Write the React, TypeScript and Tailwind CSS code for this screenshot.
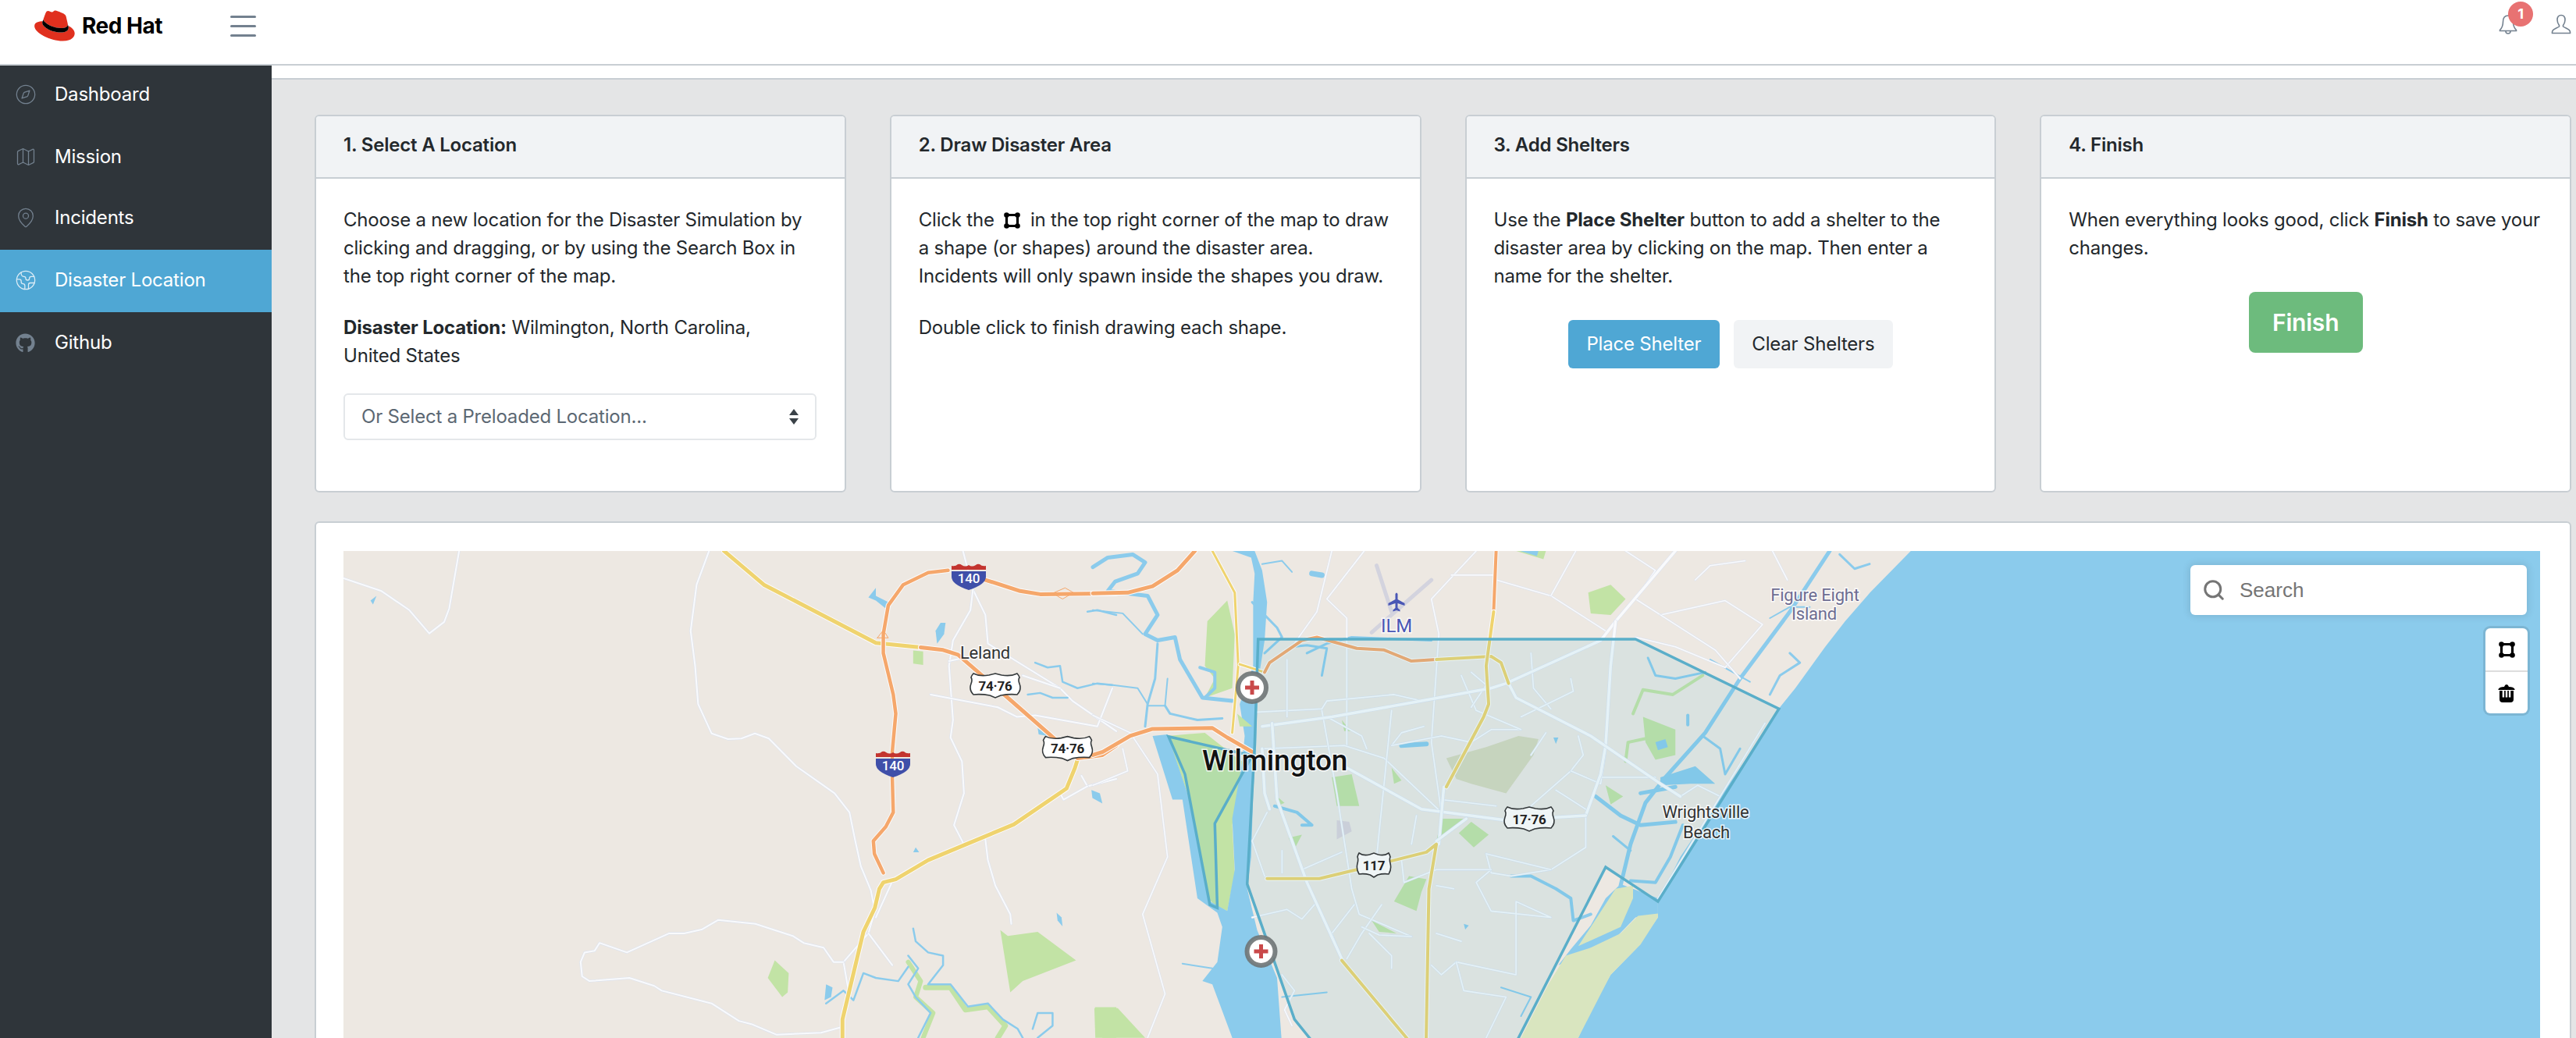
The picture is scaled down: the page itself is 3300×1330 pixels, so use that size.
import React from "react";
import { Compass, Map as MapIcon, MapPin, Earth, Search } from "lucide-react";
import { FaGithub } from "react-icons/fa";

const LAND = "#ede8e2";
const WATER = "#8bcbec";
const GREEN = "#c2e3a5";
const ORANGE = "#f5a76b";
const YELLOW = "#efd36e";

// map coords are read off the zoomed crops, so each group gets its own scale
const LEFT = "translate(-10,-16) scale(0.6378,0.408)";
const RIGHT = "translate(960,-16) scale(0.6378,0.408)";

const L = ({ p, c, w }: { p: string; c: string; w: number }) => (
    <polyline points={p} fill="none" stroke={c} strokeWidth={w} strokeLinejoin="round" strokeLinecap="round" vectorEffect="non-scaling-stroke" />
);
const F = ({ p, c }: { p: string; c: string }) => <polygon points={p} fill={c} />;

// road with a thin light edge
const R = ({ p, c, w }: { p: string; c: string; w: number }) => (
    <>
        <L p={p} c="#fbfbfc" w={w + 2} />
        <L p={p} c={c} w={w} />
    </>
);
const Minor = ({ p, w = 2 }: { p: string; w?: number }) => (
    <>
        <L p={p} c="#dde3ef" w={w + 1.2} />
        <L p={p} c="#f9fafc" w={w} />
    </>
);

const leftRoads = [
    "16,125 92,165 148,225 188,298 218,262 228,220 248,39",
    "750,39 725,145 713,290 722,400 728,520 755,612 788,630 815,628 842,612 870,628 925,715 1002,800 1032,860 1043,945 1055,1030 1075,1105 1083,1170 1070,1240 1020,1330 1030,1420",
    "1260,39 1280,160 1305,240 1310,330 1455,470 1480,510 1568,605",
    "1280,160 1275,225 1240,320 1232,400 1240,570 1235,625 1258,700 1262,800 1242,900 1260,955",
    "1195,490 1330,530 1368,560 1405,555 1530,590 1560,470",
    "1305,945 1310,1010 1325,1090 1355,1180 1357,1210",
    "1380,430 1455,470",
    "1232,385 1290,365",
    "1070,1240 1118,1340",
    "1120,1070 1085,1190",
    "1568,755 1510,778 1498,745",
    "1510,778 1462,820 1455,800",
    "1020,1330 1000,1330 980,1285 940,1270 918,1248 843,1210 768,1198 735,1228 700,1240 670,1240 585,1300 530,1270 520,1295 500,1300 492,1330 495,1375 510,1390 590,1380 640,1405 655,1420 755,1460 810,1515 835,1525 885,1558 975,1552 1015,1535",
];

const leftCreeks = [
    "1160,1225 1165,1265 1190,1300 1220,1310 1220,1340 1190,1400 1235,1400 1270,1470 1310,1460 1340,1510 1370,1540 1380,1568",
    "1150,1310 1170,1350 1150,1400 1165,1440 1195,1490 1170,1568",
    "985,1460 1020,1420 1040,1450 1060,1365 1085,1380 1130,1390 1150,1345",
    "1405,390 1430,405 1455,400 1460,450 1490,470 1530,455 1560,460",
    "1390,490 1415,485 1440,500 1470,500",
    "1510,230 1530,225 1568,240",
    "1400,1540 1410,1490 1440,1490 1440,1530 1410,1568",
];

const rightThinRoads = [
    "0,555 75,610 130,740 150,1000 100,1180 145,1430 110,1568",
    "0,775 70,730 60,660",
    "480,39 450,230 400,340",
    "545,39 470,190 510,250 510,650",
    "770,39 680,190 695,300 680,640 700,860",
    "810,130 920,180 1030,290",
    "720,115 810,115",
    "970,39 920,180",
    "1070,39 1130,100 1090,190 1140,240 1270,195 1345,270 1270,405 1170,340 1090,310",
    "1140,240 1250,350 1300,440",
    "1210,130 1240,85 1310,70",
    "1365,39 1395,130",
    "330,545 460,535 470,510 605,490 660,510",
    "345,660 505,650 585,690 700,860",
    "390,380 390,560",
    "470,560 540,620 550,660",
    "460,540 490,800 520,1100 535,1180 640,1250",
    "600,540 570,1000",
    "600,650 620,610 665,590",
    "600,650 700,620 760,640 800,600 860,600",
    "740,430 770,540 860,600",
    "760,420 790,460 760,530",
    "880,360 885,470 920,535",
    "960,440 965,480 860,560",
    "910,610 880,680",
    "975,620 985,680 960,730 880,840",
    "960,730 1020,770 1030,670",
    "1020,750 1130,750",
    "930,790 990,850",
    "650,870 640,960",
    "810,840 700,820",
    "790,990 800,1050 840,1060 920,1040 990,970 990,870",
    "790,990 920,1040",
    "800,1040 770,1080 800,1170 920,1190 850,1140 850,1370 730,1330 700,1370 680,1340",
    "730,1330 745,1420 830,1440 790,1568",
    "620,1010 625,1080 690,1040 800,1040",
    "320,1190 390,1165 420,1195 445,1150",
    "420,1040 500,985",
    "380,980 380,1050",
    "350,860 320,950 345,1060",
    "525,1150 480,1240 500,1320",
    "580,1150 540,1240 510,1320",
    "540,1220 575,1245 640,1250",
    "555,1240 600,1310 600,1350",
    "690,1240 740,1265",
    "690,1090 725,1100",
    "1180,810 1215,775 1260,810",
    "1350,580 1260,810 1135,1130",
    "380,1370 405,1420 385,1480 400,1530",
];

const rightThickRoads = [
    "340,590 480,560 660,510 800,470 830,455 1020,320 1050,260 1170,39",
    "1050,260 1040,400 1030,650 1020,740 990,870",
    "835,455 850,500 1000,620 1140,770 1180,810",
    "510,720 660,850 830,885 990,870",
    "360,580 370,820 430,1080 500,1320",
    "340,660 345,800 355,850",
    "705,780 695,960",
    "750,880 690,950",
];

const rightCreeks: [string, number][] = [
    ["0,90 30,60 80,50 105,75 90,110 45,135 30,165 110,180 130,240 105,300 130,320 165,310 175,380 220,500 280,510", 5],
    ["0,225 60,235 100,300", 2],
    ["130,330 125,440 110,520 105,590", 3],
    ["110,525 145,525 150,440", 2],
    ["145,525 155,550 210,570 260,565", 3],
    ["0,455 40,460 90,470 110,520", 2],
    ["215,405 245,420 245,470 225,500", 4],
    ["340,80 380,70 400,105", 2],
    ["320,200 370,280 380,310 345,360", 3],
    ["400,340 430,335 470,345 460,430", 3],
    ["430,360 470,330 520,310 680,320", 3],
    ["1480,39 1400,230 1300,440 1230,610 1150,750 1110,830 1080,960 1060,1090", 5],
    ["1010,810 1060,870 1100,900 1170,890", 5],
    ["1045,935 1080,980", 3],
    ["1100,800 1170,780", 5],
    ["1185,900 1160,1000 1130,1080 1080,1075", 4],
    ["1320,450 1240,380", 2],
    ["1115,375 1130,430 1170,440 1230,420", 3],
    ["1400,360 1420,390 1380,430 1360,490", 3],
    ["1225,620 1260,660 1270,740 1300,660", 3],
    ["840,1060 880,1060 930,1100 960,1130 965,1200 1000,1180", 4],
    ["365,840 410,860 440,900 420,900", 4],
    ["620,650 670,645", 6],
    ["820,1410 880,1440 860,1500", 2],
    ["180,1335 240,1350", 2],
    ["380,1440 470,1425", 2],
    ["1360,250 1400,215 1440,215", 2],
    ["1500,50 1530,95 1560,80", 3],
    ["1195,555 1195,585", 4],
    ["460,115 440,110", 7],
];

const Hospital = ({ x, y }: { x: number; y: number }) => (
    <g transform={`translate(${x},${y})`}>
        <circle r="18" fill="#fff" stroke="#6e7475" strokeOpacity="0.9" strokeWidth="6" />
        <path d="M-2.5 -9h5v6.5h6.5v5h-6.500v6.500h-5v-6.500h-6.500v-5h6.500z" fill="#c9494a" />
    </g>
);

const UsShield = ({ x, y, t, w = 68, fill = "#fff" }: { x: number; y: number; t: string; w?: number; fill?: string }) => (
    <g transform={`translate(${x - w / 2},${y - 16})`}>
        <path
            transform={`scale(${w / 68},1)`}
            d="M6 1Q4 3 3 6Q5 9 3 14Q0 22 6 28Q16 27 27 29L34 32L41 29Q52 27 62 28Q68 22 65 14Q63 9 65 6Q64 3 62 1Q54 5 42 3L34 1L26 3Q14 5 6 1Z"
            fill={fill}
            stroke="#33383a"
            strokeWidth="1.6"
            vectorEffect="non-scaling-stroke"
        />
        <text x={w / 2} y="22.500" textAnchor="middle" fontFamily="Roboto, sans-serif" fontWeight="700" fontSize="17" fill="#222">{t}</text>
    </g>
);

const IShield = ({ x, y }: { x: number; y: number }) => (
    <g transform={`translate(${x - 22},${y - 16})`}>
        <path d="M0 3q5 1 8 -2q3 -1 5 1q5 3 9 0q4 3 9 0q2 -2 5 -1q3 3 8 2v5h-44z" fill="#c3342f" />
        <path d="M0 10h44v7q0 10 -22 17q-22 -7 -22 -17z" fill="#3f4fa9" />
        <text x="22" y="25" textAnchor="middle" fontFamily="Roboto, sans-serif" fontWeight="500" fontSize="17" fill="#fff">140</text>
    </g>
);

const Label = ({ x, y, t, size, fill = "#333", weight = 400 }: { x: number; y: number; t: string; size: number; fill?: string; weight?: number }) => (
    <text x={x} y={y} textAnchor="middle" fontFamily="Roboto, sans-serif" fontSize={size} fontWeight={weight} fill={fill} stroke="#fff" strokeWidth="3" strokeOpacity="0.8" style={{ paintOrder: "stroke" }}>
        {t}
    </text>
);

const DrawIcon = () => (
    <svg width="21" height="21" viewBox="0 0 21 21" className="inline-block align-[-3px]">
        <path d="M3.500 3.500h14v14h-14z" stroke="#000" strokeWidth="3.200" fill="none" />
        <circle cx="3.500" cy="3.500" r="3.300" />
        <circle cx="17.500" cy="3.500" r="3.300" />
        <circle cx="3.500" cy="17.500" r="3.300" />
        <circle cx="17.500" cy="17.500" r="3.300" />
    </svg>
);

const TrashIcon = () => (
    <svg width="22" height="24" viewBox="0 0 22 24">
        <path d="M0.500 7Q2 4 8 4Q9 1 11 1Q13 1 14 4Q20 4 21.500 7V8H0.500Z" />
        <path d="M2 9H20V20Q20 24 16 24H6Q2 24 2 20Z" />
        <path d="M5.700 9h2.400v8.500h-2.400zM9.800 9h2.400v8.500h-2.400zM13.900 9h2.400v8.500h-2.400z" fill="#fff" />
    </svg>
);

const MapArt = () => (
    <svg viewBox="0 0 2814 660" width="2814" height="660" className="block">
        <rect width="2814" height="660" fill={LAND} />

        {/* west side */}
        <g transform={LEFT}>
            {leftRoads.map((p, i) => <Minor key={i} p={p} />)}
            <F c={GREEN} p="1160,352 1180,355 1180,397 1160,393" />
            <F c={GREEN} p="882,1325 910,1365 908,1425 897,1440 868,1380" />
            <F c={GREEN} p="1335,1230 1350,1248 1410,1235 1487,1325 1380,1390 1355,1425" />
            <F c={GREEN} p="1525,1472 1568,1472 1568,1568 1540,1568" />
            <L p="1150,1330 1175,1390 1165,1440 1200,1490 1180,1568" c={GREEN} w={6} />
            <L p="1185,1410 1235,1410 1265,1480 1310,1470 1345,1530 1330,1568" c={GREEN} w={7} />
            <F c={WATER} p="1070,185 1085,155 1085,180 1110,200 1105,220 1085,195" />
            <F c={WATER} p="1215,265 1225,265 1222,300 1208,330 1205,290" />
            <F c={WATER} p="1410,595 1430,620 1412,615" />
            <F c={WATER} p="1518,790 1535,800 1540,832 1520,815" />
            <F c={WATER} p="1165,970 1172,985 1160,985" />
            <F c={WATER} p="1448,1175 1458,1190 1460,1218 1450,1200" />
            <F c={WATER} p="70,195 82,180 75,207" />
            <F c={WATER} p="985,1400 998,1410 995,1440 982,1450" />
            {leftCreeks.map((p, i) => <L key={i} p={p} c={WATER} w={2.5} />)}
            <R p="780,39 860,145 1085,328 1175,342" c={YELLOW} w={5} />
            <R p="1018,1568 1018,1510 1060,1235 1083,1160 1092,1100 1100,1080 1125,1070 1190,1010 1362,898 1468,785 1485,720 1490,695" c={YELLOW} w={5} />
            <R p="1175,342 1220,350 1250,365 1350,500 1445,630 1470,660 1490,690 1540,680 1568,650" c={ORANGE} w={5} />
            <R p="1230,100 1190,107 1140,145 1110,210 1100,300 1100,360 1120,490 1125,550 1118,670 1118,750 1120,860 1105,905 1080,950 1082,990 1100,1050" c={ORANGE} w={4.5} />
            <R p="1305,130 1375,165 1415,175 1568,172" c={ORANGE} w={5} />
            <L p="1088,312 1100,288 1110,312 1088,312" c={ORANGE} w={1} />
            <L p="1440,172 1465,155 1482,170 1460,190 1440,172" c={ORANGE} w={1} />
            <L p="600,35 770,35" c="#fff" w={3} />
        </g>

        {/* wilmington and the coast */}
        <g transform={RIGHT}>
            <F c={WATER} p="1643,39 3000,39 3000,1700 930,1700 975,1568 1000,1480 1040,1370 1090,1290 1135,1190 1135,1140 1180,1000 1240,860 1300,720 1380,530 1411,470 1471,340 1511,260 1561,170" />
            <F c={GREEN} p="230,260 270,195 285,300 280,470 225,500 245,440 225,400" />
            <F c={GREEN} p="3,1475 50,1475 105,1568 5,1568" />
            <F c={GREEN} p="995,170 1040,145 1070,190 1040,240 1000,235" />
            <F c={GREEN} p="850,39 910,39 905,65" />
            <F c={WATER} p="858,39 895,39 892,55" />
            <F c={GREEN} p="1105,560 1170,600 1170,680 1130,695 1110,640" />
            <F c={GREEN} p="480,750 520,740 535,840 490,840" />
            <F c={GREEN} p="1030,775 1065,810 1040,835" />
            <F c={GREEN} p="700,880 745,880 690,950" />
            <F c={GREEN} p="760,890 795,930 765,970 735,925" />
            <F c={GREEN} p="635,1060 670,1070 660,1110 650,1170 605,1140" />
            <F c={GREEN} p="560,1200 610,1240 575,1235" />
            <F c={GREEN} p="600,720 620,760 605,770" />
            <F c={GREEN} p="393,940 420,930 405,975" />
            <F c={GREEN} p="370,810 385,830 370,840" />
            <F c={GREEN} p="500,570 518,605 505,605" />
            <F c={GREEN} p="150,620 225,610 290,690 300,700 280,900 285,1050 270,1170 245,1150 210,1100 190,800" />
            <L p="1085,550 1105,475 1165,490 1225,430" c={GREEN} w={4} />
            <L p="1070,700 1075,640 1120,625" c={GREEN} w={4} />
            <F c="#d6d8bd" p="710,690 790,655 855,620 895,630 885,680 830,800 760,770 730,755" />
            <F c="#dbd3db" p="490,885 515,890 520,920 490,945" />
            <L p="570,85 600,230" c="#d3d3de" w={5} />
            <L p="560,295 680,130" c="#d3d3de" w={5} />

            {/* cape fear */}
            <F c={WATER} p="280,39 325,39 340,100 350,200 345,320 335,420 330,520 328,650 322,800 318,1000 310,1100 330,1230 370,1380 385,1700 300,1700 280,1568 240,1400 220,1390 250,1330 260,1220 250,1175 210,1130 180,820 160,820 140,720 120,620 150,615 190,800 235,1140 270,1170 285,1040 280,880 300,700 305,620 295,520 322,400 322,200 325,110 318,60" />
            <F c={GREEN} p="290,550 320,590 295,590" />
            <F c={WATER} p="1135,1130 1060,1085 1030,1130 1000,1215 960,1290 935,1340 1040,1270 1090,1190 1135,1180" />
            <F c="#d9e5bf" p="1085,1090 1050,1100 1000,1220 975,1280 1060,1220 1085,1130" />
            <F c="#d9e5bf" p="1135,1178 1095,1185 1060,1240 1000,1285 950,1310 915,1400 860,1568 815,1700 930,1700 975,1568 1040,1370 1100,1275 1135,1190" />
            <F c={WATER} p="1140,750 1210,715 1250,770 1200,770 1140,775" />
            <F c={WATER} p="1130,640 1150,630 1155,655 1135,665" />
            <F c={WATER} p="925,625 935,625 930,645" />
            <F c={WATER} p="745,1210 755,1215 748,1228" />
            {rightCreeks.map(([p, w], i) => <L key={i} p={p} c={WATER} w={w} />)}
            {rightThinRoads.map((p, i) => <Minor key={i} p={p} w={1.6} />)}
            {rightThickRoads.map((p, i) => <Minor key={i} p={p} w={3.5} />)}

            <R p="0,172 70,170 120,150 170,100 205,39" c={ORANGE} w={5} />
            <R p="0,680 20,670 75,620 120,598 240,595 270,625 320,670" c={ORANGE} w={5} />
            <R p="240,39 285,170 292,400 280,610" c={YELLOW} w={3} />
            <R p="295,395 345,420" c={YELLOW} w={3} />
            <R p="345,420 355,390 420,320 450,310 530,345 585,350 640,385 690,380" c={ORANGE} w={4} />
            <R p="690,380 800,370 820,390 835,455" c={YELLOW} w={4} />
            <R p="810,39 805,230" c={ORANGE} w={4} />
            <R p="805,230 790,400 795,520 785,560 710,780" c={YELLOW} w={4} />
            <R p="350,1068 455,1068 530,1040 670,985 690,960 675,1100 668,1700" c={YELLOW} w={4} />
            <R p="500,1325 630,1568 700,1700" c={YELLOW} w={4} />

            {/* drawn disaster area, runs past the bottom of the shot */}
            <polygon points="332,316 1090,316 1378,535 1135,1140 1030,1032 855,1568 810,1700 500,1700 435,1568 405,1510 310,1085 325,650" fill="#3bb2d0" fillOpacity="0.1" stroke="#5aaec9" strokeWidth="3.500" vectorEffect="non-scaling-stroke" />
            <polygon points="152,622 320,682 245,895 250,1160 235,1150 185,740" fill="#3bb2d0" fillOpacity="0.1" stroke="#5aaec9" strokeWidth="3.500" vectorEffect="non-scaling-stroke" />
        </g>

        <UsShield x={835} y={172} t="74·76" />
        <UsShield x={927.5} y={252.6} t="74·76" />
        <UsShield x={1519} y={343} t="17·76" fill="#eff5f6" />
        <UsShield x={1320} y={402} t="117" w={46} fill="#eff5f6" />
        <IShield x={801} y={32} />
        <IShield x={704} y={272} />
        <Hospital x={1164} y={175} />
        <Hospital x={1175.5} y={513} />

        <Label x={822} y={138} t="Leland" size={22} />
        <Label x={1193} y={281} t="Wilmington" size={37} weight={500} fill="#111" />
        <Label x={1745} y={342} t="Wrightsville" size={22} />
        <Label x={1746} y={368} t="Beach" size={22} />
        <Label x={1885} y={64} t="Figure Eight" size={22} fill="#6d6d92" />
        <Label x={1884} y={88} t="Island" size={22} fill="#6d6d92" />
        <Label x={1349} y={104} t="ILM" size={24} fill="#4a57b5" />
        <path transform="translate(1349,66)" d="M-1.500 -11q1.500 -3 3 0v7l9 5v3l-9 -3v6l3 2.500v2l-4.500 -1.500l-4.500 1.500v-2l3 -2.500v-6l-9 3v-3l9 -5z" fill="#4a57b5" />
    </svg>
);

const navItems = [
    { label: "Dashboard", icon: <Compass size={28} strokeWidth={1.1} />, cls: "h-[79px] pb-[5px] text-white" },
    { label: "Mission", icon: <MapIcon size={28} strokeWidth={1.1} />, cls: "h-[79px] pb-[4px] text-white" },
    { label: "Incidents", icon: <MapPin size={28} strokeWidth={1.1} />, cls: "h-[78px] pb-[4px] text-white" },
    { label: "Disaster Location", icon: <Earth size={28} strokeWidth={1.1} />, cls: "h-[80px] pb-[2px] text-white bg-[#4fa7d4]", active: true },
    { label: "Github", icon: <FaGithub size={25} className="ml-[1px]" />, cls: "h-[80px] pb-[2px] text-white" },
];

const Card = ({ title, children }: { title: string; children: React.ReactNode }) => (
    <div className="h-[484px] bg-white border-2 border-[#c8ced3] rounded-md overflow-hidden">
        <div className="h-[80px] pb-[5px] flex items-center px-[35px] bg-[#f1f3f5] border-b-2 border-[#c8ced3] font-semibold">{title}</div>
        <div className="pl-[35px] pr-[32px] pt-[35px]">{children}</div>
    </div>
);

export default function App() {
    return (
        <div className="w-[3300px] h-[1330px] overflow-hidden flex flex-col bg-white text-[#23282c] text-[24px] leading-[36px] tracking-[-0.2px] font-['Inter',sans-serif]">
            <header className="h-[84px] shrink-0 flex items-start border-b-2 border-[#c8ced3] relative">
                <div className="ml-[44px] w-[251px] mt-[13px] flex items-center">
                    <svg width="52" height="40" viewBox="0 0 192 145">
                        <path fill="#e0301e" d="M127.47 83.49c12.51 0 30.61-2.58 30.61-17.46a14 14 0 0 0-.31-3.42l-7.45-32.36c-1.72-7.12-3.23-10.35-15.73-16.6C124.89 8.69 103.76.5 97.51.5 91.69.5 90 8 83.06 8c-6.68 0-11.64-5.6-17.89-5.6-6 0-9.91 4.09-12.93 12.5 0 0-8.41 23.72-9.49 27.16A6.43 6.43 0 0 0 42.53 44c0 9.22 36.3 39.45 84.94 39.45M160 72.07c1.73 8.19 1.73 9.05 1.73 10.13 0 14-15.74 21.77-36.43 21.77C78.54 104 37.58 76.6 37.58 58.49a18.45 18.45 0 0 1 1.51-7.33C22.27 52 .5 55 .5 74.22c0 31.48 74.59 70.28 133.65 70.28 45.28 0 56.7-20.48 56.7-36.65 0-12.72-11-27.16-30.83-35.78" />
                        <path fill="#000" d="M160 72.07c1.73 8.19 1.73 9.05 1.73 10.13 0 14-15.74 21.77-36.43 21.77C78.54 104 37.58 76.6 37.58 58.49a18.45 18.45 0 0 1 1.51-7.33l3.66-9.06A6.43 6.43 0 0 0 42.53 44c0 9.22 36.3 39.45 84.94 39.45 12.51 0 30.61-2.58 30.61-17.46a14 14 0 0 0-.31-3.42Z" />
                    </svg>
                    <span className="ml-[9px] text-[28px] font-bold text-black tracking-[-0.5px] leading-[40px]">Red Hat</span>
                </div>
                <div className="mt-[20px] w-[33px] flex flex-col gap-[9px]">
                    <span className="h-[3px] bg-[#73818f] rounded-sm" />
                    <span className="h-[3px] bg-[#73818f] rounded-sm" />
                    <span className="h-[3px] bg-[#73818f] rounded-sm" />
                </div>
                <svg width="24" height="26" viewBox="0 0 24 26" fill="none" stroke="#73818f" strokeWidth="1.6" className="absolute left-[3201px] top-[18px]">
                    <path d="M12 2C7 2 5.500 6 5.500 10C5.500 15 4 18 1.500 20.500V21.500H22.500V20.500C20 18 18.500 15 18.500 10C18.500 6 17 2 12 2Z" />
                    <path d="M9 22a3 3 0 0 0 6 0" />
                </svg>
                <span className="absolute left-[3213px] top-[2px] w-[32px] h-[32px] rounded-full bg-[#e87272] text-white text-[18px] leading-[32px] font-bold text-center">1</span>
                <svg width="26" height="26" viewBox="0 0 26 26" fill="none" stroke="#73818f" strokeWidth="1.6" className="absolute left-[3268px] top-[18px]">
                    <path d="M13 1.500C9.500 1.500 8 4 8 7.500C8 11 9.500 13 10.500 14.500V16C8 18 1.500 19 1.500 23V24.500H24.500V23C24.500 19 18 18 15.500 16V14.500C16.500 13 18 11 18 7.500C18 4 16.500 1.500 13 1.500Z" />
                </svg>
            </header>

            <div className="flex flex-1 min-h-0">
                <nav className="w-[348px] shrink-0 bg-[#2f353a]">
                    {navItems.map((item) => (
                        <div key={item.label} className={`flex items-center ${item.cls}`}>
                            <span className={`w-[70px] pl-[19px] ${item.active ? "text-[#dcecf6]" : "text-[#73818f]"}`}>{item.icon}</span>
                            <span>{item.label}</span>
                        </div>
                    ))}
                </nav>

                <main className="flex-1 min-w-0 flex flex-col">
                    <div className="h-[18px] shrink-0 border-b-2 border-[#c8ced3]" />
                    <div className="flex-1 bg-[#e4e5e6] pt-[45px] pl-[55px] pr-[6px]">
                        <div className="grid grid-cols-4 gap-[56px]">
                            <Card title="1. Select A Location">
                                <p className="mb-[30px]">Choose a new location for the Disaster Simulation by clicking and dragging, or by using the Search Box in the top right corner of the map.</p>
                                <p className="mb-[30px]"><b className="font-bold">Disaster Location:</b> Wilmington, North Carolina,<br />United States</p>
                                <div className="h-[60px] mr-[4px] border-2 border-[#e4e7ea] rounded-md flex items-center justify-between pl-[21px] pr-[20px] text-[#5c6873]">
                                    <span>Or Select a Preloaded Location...</span>
                                    <svg width="14" height="22" viewBox="0 0 14 22"><path d="M7 1l6 8h-12zM7 21l-6-8h12z" fill="#3a4248" /></svg>
                                </div>
                            </Card>
                            <Card title="2. Draw Disaster Area">
                                <p className="mb-[30px]">Click the <span className="mx-[6px]"><DrawIcon /></span> in the top right corner of the map to draw a shape (or shapes) around the disaster area. Incidents will only spawn inside the shapes you draw.</p>
                                <p>Double click to finish drawing each shape.</p>
                            </Card>
                            <Card title="3. Add Shelters">
                                <p className="mb-[38px]">Use the <b className="font-bold">Place Shelter</b> button to add a shelter to the disaster area by clicking on the map. Then enter a name for the shelter.</p>
                                <div className="flex justify-center gap-[18px] pr-[3px]">
                                    <button className="h-[62px] w-[194px] rounded-md bg-[#4fa7d4] text-white">Place Shelter</button>
                                    <button className="h-[62px] w-[204px] rounded-md bg-[#f1f3f5] text-[#23282c]">Clear Shelters</button>
                                </div>
                            </Card>
                            <Card title="4. Finish">
                                <p className="mb-[38px]">When everything looks good, click <b className="font-bold">Finish</b> to save your changes.</p>
                                <div className="flex justify-center pr-[3px]">
                                    <button className="h-[78px] w-[146px] rounded-lg bg-[#6dbb7d] text-white text-[30px] font-semibold">Finish</button>
                                </div>
                            </Card>
                        </div>

                        <div className="mt-[37px] h-[700px] bg-white border-2 border-[#c8ced3] rounded-md pt-[36px] pl-[35px]">
                            <div className="relative w-[2814px] h-[660px] overflow-hidden">
                                <MapArt />
                                <div className="absolute left-[2366px] top-[18px] w-[431px] h-[64px] bg-white rounded-md shadow-[0_0_10px_2px_rgba(0,0,0,0.1)] flex items-center pl-[15px] text-[#757575] text-[26px] tracking-normal font-['Liberation_Sans',sans-serif]">
                                    <Search size={30} strokeWidth={2.4} className="mr-[18px]" />
                                    <span>Search</span>
                                </div>
                                <div className="absolute left-[2744px] top-[99px] w-[54px] h-[109px] bg-white rounded-md shadow-[0_0_0_3px_rgba(0,0,0,0.1)] flex flex-col">
                                    <div className="h-[56px] flex items-center justify-center border-b-2 border-[#ddd]"><DrawIcon /></div>
                                    <div className="flex-1 flex items-center justify-center"><TrashIcon /></div>
                                </div>
                            </div>
                        </div>
                    </div>
                </main>
            </div>
        </div>
    );
}
